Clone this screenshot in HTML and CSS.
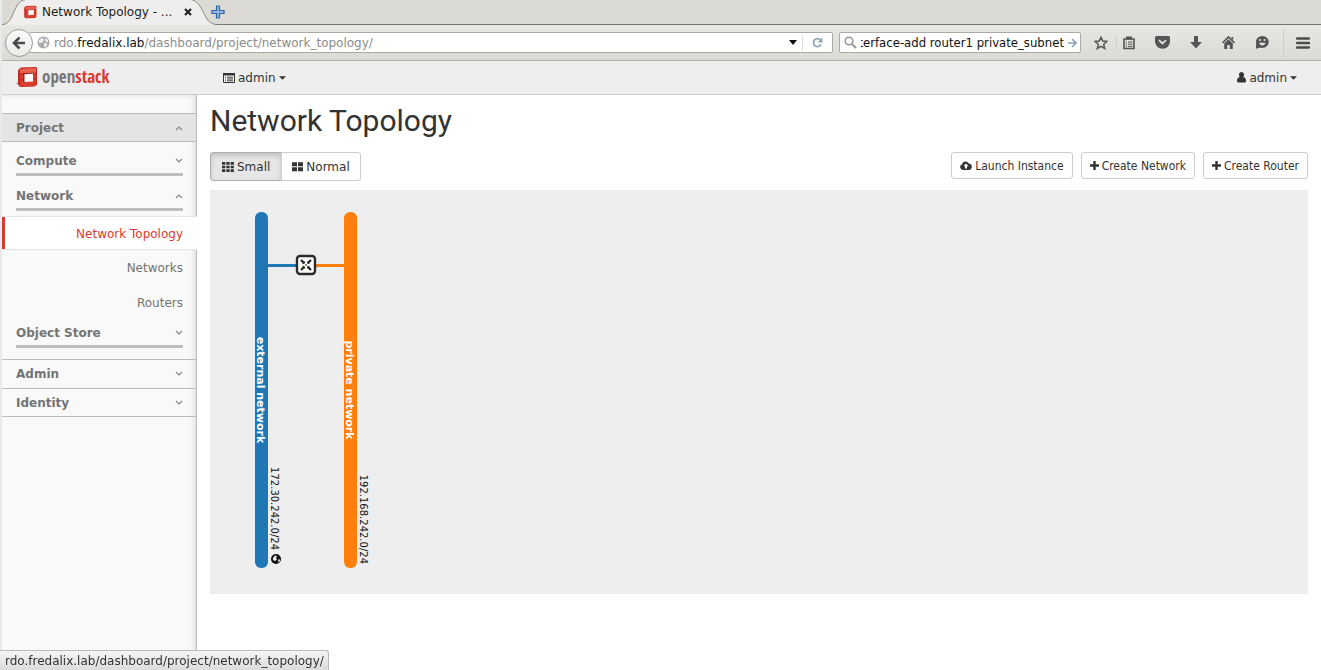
FILE: index.html
```
<!DOCTYPE html>
<html lang="en">
<head>
<meta charset="utf-8">
<title>Network Topology - OpenStack Dashboard</title>
<link rel="stylesheet" href="styles.css">
</head>
<body>
<svg class="defs" width="0" height="0" aria-hidden="true">
  <symbol id="cube" viewBox="0 0 22 22">
    <path d="M0 17l3-1v4z" fill="#a9a9a9"/>
    <path d="M2 4L5 1.500 20 1l1 1v17l-3 1.500L4 21l-2-3z" fill="#c5281c"/>
    <path d="M4 3L20 2v17.500L4 20.500z" fill="#dd3d2d"/>
    <path d="M4 3l16-1v4L4 7z" fill="#e8604f"/>
    <path d="M3 14h4M17 13h4M2 8h5M17 8h4" stroke="#b52a1e" stroke-width="1"/>
    <path d="M7 7l10-.5v9L7 16z" fill="#fff"/>
    <path d="M7 7l10-.5v1.200L8.500 8.200v7.700L7 16z" fill="#a3261b"/>
  </symbol>
  <symbol id="up" viewBox="0 0 8 6"><path d="M1 5l3-3 3 3" fill="none" stroke="#858585" stroke-width="1.200"/></symbol>
  <symbol id="down" viewBox="0 0 8 6"><path d="M1 1l3 3 3-3" fill="none" stroke="#858585" stroke-width="1.200"/></symbol>
  <symbol id="caret" viewBox="0 0 8 4"><path d="M0 0h8L4 4z" fill="#333"/></symbol>
  <symbol id="plus" viewBox="0 0 9 9"><path d="M3.300 0h2.400v3.300H9v2.400H5.700V9H3.300V5.700H0V3.300h3.300z" fill="#333"/></symbol>
</svg>

<div class="tabs">
  <svg class="tab-shape" viewBox="0 0 216 25" width="216" height="25" aria-hidden="true">
    <path d="M0 24.500C13 24.500 10 1 24 -0.500H188C203 1 200 24.500 215 24.500V26H0z" fill="#efeeec" stroke="#8a8983"/>
  </svg>
  <div class="tab">
    <svg width="14" height="14"><use href="#cube"/></svg>
    <span class="tab-title">Network Topology - ...</span>
    <button class="bare" aria-label="Close tab"><svg width="8" height="8" viewBox="0 0 8 8"><path d="M1 1l6 6M7 1L1 7" stroke="#222" stroke-width="2.200"/></svg></button>
  </div>
  <button class="bare new-tab" aria-label="New tab"><svg width="14" height="14" viewBox="0 0 14 14"><path d="M5.500 1h3v4.500H13v3H8.500V13h-3V8.500H1v-3h4.500z" fill="#8fb8e4" stroke="#3465a4" stroke-width="1.200"/></svg></button>
</div>

<div class="toolbar">
  <button class="back" aria-label="Back"><svg width="14" height="14" viewBox="0 0 14 14"><path d="M7.500 1.500L2 7l5.500 5.500M2.500 7H13" fill="none" stroke="#4c4c4c" stroke-width="2.600"/></svg></button>
  <div class="urlbar">
    <svg width="13" height="13" viewBox="0 0 13 13"><circle cx="6.500" cy="6.500" r="6" fill="#aaa"/><path d="M2 4l3-2 2 1-1 3-2 1-2 0zM8 2l3 2v2l-2 0-1-2zM7 7l3 0 0 2-2 3-1-2z" fill="#eee"/></svg>
    <label class="host" for="url">rdo.<b>fredalix.lab</b></label>
    <input id="url" type="text" value="/dashboard/project/network_topology/">
    <button class="bare" aria-label="History"><svg width="8" height="5" viewBox="0 0 8 5"><path d="M0 0h8L4 5z" fill="#111"/></svg></button>
    <button class="bare reload" aria-label="Reload"><svg width="11" height="11" viewBox="0 0 11 11"><path d="M9 7.500A4 4 0 1 1 8.500 3" fill="none" stroke="#8fa3b5" stroke-width="1.700"/><path d="M10.500 0.500v5H5.500z" fill="#8fa3b5"/></svg></button>
  </div>
  <div class="search">
    <svg width="13" height="13" viewBox="0 0 13 13"><circle cx="5" cy="5" r="3.800" fill="none" stroke="#999" stroke-width="1.600"/><path d="M8 8l4 4" stroke="#999" stroke-width="2"/></svg>
    <input type="text" dir="rtl" aria-label="Search" value="neutron router-interface-add router1 private_subnet">
    <button class="bare" aria-label="Go"><svg width="9" height="10" viewBox="0 0 9 10"><path d="M0 5h8M4 1l4 4-4 4" fill="none" stroke="#8fa3b5" stroke-width="1.600"/></svg></button>
  </div>
  <div class="tools">
    <button class="bare" aria-label="Bookmark"><svg width="14" height="14" viewBox="0 0 14 14"><path d="M7 1.200l1.700 3.900 4.200.4-3.200 2.800 1 4.200L7 10.300l-3.700 2.200 1-4.200L1.100 5.500l4.200-.4z" fill="none" stroke="#555" stroke-width="1.500"/></svg></button>
    <button class="bare list" aria-label="Bookmarks list"><svg width="12" height="14" viewBox="0 0 12 14"><path d="M1 3h10v9.500H1z" fill="none" stroke="#555" stroke-width="1.600"/><path d="M3 0.500h6V3.500H3z" fill="#555"/><path d="M2.700 6H4M5 6h4.500M2.700 8.200H4M5 8.200h4.500M2.700 10.400H4M5 10.400h4.500" stroke="#555"/></svg></button>
    <button class="bare" aria-label="Pocket"><svg width="15" height="13" viewBox="0 0 15 13"><path d="M1.500 0h12Q15 0 15 1.500V5.500a7.500 7.300 0 0 1-15 0V1.500Q0 0 1.500 0z" fill="#555"/><path d="M4 4.200l3.500 3.300L11 4.200" fill="none" stroke="#e4e3df" stroke-width="1.800"/></svg></button>
    <button class="bare" aria-label="Downloads"><svg width="12" height="13" viewBox="0 0 12 13"><path d="M4 0h4v6h4l-6 6.500L0 6h4z" fill="#555"/></svg></button>
    <button class="bare" aria-label="Home"><svg width="13" height="13" viewBox="0 0 13 13"><path d="M.5 7l6-6 6 6" fill="none" stroke="#555" stroke-width="1.700"/><path d="M2.200 7.500l4.300-4.200 4.300 4.200V13H7.800V9H5.200v4h-3zM9.500 1h1.700v3.200L9.500 2.700z" fill="#555"/></svg></button>
    <button class="bare" aria-label="Chat"><svg width="14" height="13" viewBox="0 0 14 13"><ellipse cx="7.300" cy="6" rx="6.500" ry="6" fill="#555"/><path d="M1 8v4.800l5-1.500z" fill="#555"/><path d="M4 6.800h6.600Q9.500 9.500 7.300 9.500T4 6.800z" fill="#e4e3df"/><circle cx="5" cy="4" r="1" fill="#e4e3df"/><circle cx="9.500" cy="4" r="1" fill="#e4e3df"/></svg></button>
    <button class="bare menu" aria-label="Menu"><svg width="14" height="12" viewBox="0 0 14 12"><path d="M1 1.500h12M1 6h12M1 10.500h12" stroke="#4c4c4c" stroke-width="2.400" stroke-linecap="round"/></svg></button>
  </div>
</div>

<header class="topbar">
  <a class="brand" href="#"><svg width="22" height="22"><use href="#cube"/></svg><span>open<em>stack</em></span></a>
  <button class="bare project"><svg width="12" height="10" viewBox="0 0 12 10"><path d="M.5.5h11v9H.5z" fill="#fff" stroke="#333"/><path d="M0 0h12v2.500H0z" fill="#333"/><path d="M2 4.200h1M4 4.200h6M2 6h1M4 6h6M2 7.800h1M4 7.800h6" stroke="#333"/></svg>admin<svg width="7" height="4"><use href="#caret"/></svg></button>
  <button class="bare user"><svg width="9" height="11" viewBox="0 0 9 11"><path d="M4.500 0a2.600 2.800 0 0 1 1.700 4.900Q9 5.500 9 9q0 1.500-1.500 1.500h-6Q0 10.500 0 9 0 5.500 2.800 4.900A2.600 2.800 0 0 1 4.500 0z" fill="#333"/></svg>admin<svg width="7" height="4"><use href="#caret"/></svg></button>
</header>

<div class="body">
  <nav class="sidebar">
    <button class="panel open">Project<svg width="8" height="6"><use href="#up"/></svg></button>
    <div class="groups">
      <button class="group">Compute<svg width="8" height="6"><use href="#down"/></svg></button>
      <button class="group">Network<svg width="8" height="6"><use href="#up"/></svg></button>
      <div class="links">
        <a class="active" href="#">Network Topology</a>
        <a href="#">Networks</a>
        <a href="#">Routers</a>
      </div>
      <button class="group">Object Store<svg width="8" height="6"><use href="#down"/></svg></button>
    </div>
    <button class="panel">Admin<svg width="8" height="6"><use href="#down"/></svg></button>
    <button class="panel">Identity<svg width="8" height="6"><use href="#down"/></svg></button>
  </nav>

  <main class="content">
    <h1>Network Topology</h1>
    <div class="actions">
      <div class="toggle">
        <button class="pressed"><svg width="12" height="10" viewBox="0 0 12 10"><path d="M0 1.400h12M0 5h12M0 8.600h12" stroke="#333" stroke-width="2.600" stroke-dasharray="3.300 1"/></svg>Small</button>
        <button><svg width="11" height="10" viewBox="0 0 11 10"><path d="M0 2.200h11M0 7.200h11" stroke="#333" stroke-width="4" stroke-dasharray="5 1"/></svg>Normal</button>
      </div>
      <div class="create">
        <button><svg width="12" height="9" viewBox="0 0 12 9"><path d="M3 9a3 3 0 0 1-.9-5.800A3.500 3.500 0 0 1 8.700 2.500 3.300 3.300 0 0 1 9.300 9z" fill="#333"/><path d="M6 2.500l2.600 2.800H7v2.200H5V5.300H3.400z" fill="#fff"/></svg>Launch Instance</button>
        <button><svg width="9" height="9"><use href="#plus"/></svg>Create Network</button>
        <button><svg width="9" height="9"><use href="#plus"/></svg>Create Router</button>
      </div>
    </div>
    <div class="canvas">
      <svg class="topology" width="200" height="404" viewBox="0 0 200 404">
        <path d="M57 75.500h30" stroke="#1f77b4" stroke-width="3"/>
        <path d="M104 75.500h31" stroke="#ff7f0e" stroke-width="3"/>
        <rect x="45" y="22" width="13" height="356" rx="6" fill="#1f77b4"/>
        <rect x="134" y="22" width="13" height="356" rx="6" fill="#ff7f0e"/>
        <rect x="87" y="66" width="18" height="18" rx="3" fill="#fff" stroke="#2b2b2b" stroke-width="2.400"/>
        <path d="M91 70l3.500 3.500M101 70l-3.500 3.500M91 80l3.500-3.500M101 80l-3.500-3.500" stroke="#222" stroke-width="2.200"/>
        <path d="M95 71v3h-3zM97 71v3h3zM95 79v-3h-3zM97 79v-3h3z" fill="#333"/>
        <path d="M94 73l4 4M98 73l-4 4" stroke="#888"/>
        <text class="net" transform="translate(47 200) rotate(90)">external network</text>
        <text class="net" transform="translate(136 200) rotate(90)">private network</text>
        <text class="cidr" transform="translate(61 360) rotate(90)">172.30.242.0/24</text>
        <text class="cidr" transform="translate(150 374) rotate(90)">192.168.242.0/24</text>
        <circle cx="66" cy="369" r="5" fill="#111"/>
        <path d="M63 368l2-2.500 2 .5-1 2 1 1.500-2 1.500-2-1zM68 370l1.500-1 .5 2-1.500 1.500z" fill="#eee"/>
      </svg>
    </div>
  </main>
</div>
<div class="status">rdo.fredalix.lab/dashboard/project/network_topology/</div>
</body>
</html>
```
FILE: styles.css
```
* { box-sizing: border-box; }
body {
  margin: 0;
  min-height: 100vh;
  display: flex;
  flex-direction: column;
  border-left: 2px solid #e9e9e9;
  background: #fff;
  color: #333;
  font: 12px/18px "DejaVu Sans", sans-serif;
}
svg { display: block; flex: none; }
.defs { position: absolute; }
button { font: inherit; color: inherit; cursor: pointer; }
.bare { display: flex; align-items: center; padding: 0; border: 0; background: none; }

.tabs {
  position: relative;
  display: flex;
  align-items: center;
  height: 25px;
  background: #dbdad5;
  border-bottom: 1px solid #76756e;
}
.tab-shape { position: absolute; left: 0; top: 0; }
.tab {
  position: relative;
  display: flex;
  align-items: center;
  gap: 5px;
  width: 190px;
  padding-left: 21px;
  color: #1c1c1c;
}
.tab-title { flex: 1; white-space: nowrap; }
.new-tab { position: relative; margin-left: 19px; }

.toolbar {
  display: flex;
  align-items: center;
  height: 36px;
  padding: 0 11px 0 3px;
  background: linear-gradient(#e8e7e4, #dbdad5);
  border-bottom: 1px solid #b3b2ab;
}
.toolbar input {
  min-width: 0;
  flex: 1;
  padding: 0;
  border: 0;
  outline: 0;
  background: none;
  font: inherit;
}
.back {
  position: relative;
  z-index: 1;
  display: grid;
  place-items: center;
  width: 28px;
  height: 28px;
  padding: 0;
  border: 1px solid #9c9b95;
  border-radius: 50%;
  background: linear-gradient(#fbfbfa, #ecebe9);
}
.urlbar, .search {
  display: flex;
  align-items: center;
  height: 21px;
  background: #fff;
  border: 1px solid #aaa9a2;
  border-radius: 2px;
}
.urlbar { flex: 1; margin-left: -4px; padding-left: 8px; border-left: 0; }
.host { margin-left: 4px; color: #8c8c8c; }
.host b { font-weight: normal; color: #111; }
.urlbar input { color: #8c8c8c; }
.reload { margin-left: 5px; width: 30px; height: 15px; justify-content: center; border-left: 1px solid #ddd; }
.search {
  width: 242px;
  margin-left: 6px;
  padding: 0 3px 0 4px;
  gap: 4px;
  font: 13px/18px "DejaVu Sans Condensed", "DejaVu Sans", sans-serif;
}
.search input { color: #111; }
.tools { display: flex; align-items: center; gap: 20px; margin-left: 13px; }
.list { margin-left: -12px; padding-left: 6px; border-left: 1px solid #ccc; }
.menu { height: 28px; margin-left: -6px; padding-left: 12px; border-left: 1px solid #ccc; }

.topbar {
  display: flex;
  align-items: center;
  height: 34px;
  padding: 0 24px 0 14px;
  background: #eee;
  border-bottom: 1px solid #ccc;
}
.brand {
  display: flex;
  align-items: center;
  gap: 4px;
  width: 207px;
  padding-bottom: 2px;
  color: #777;
  font: 17px/22px "Open Sans Condensed", "Liberation Sans Narrow", sans-serif;
  text-decoration: none;
}
.brand em { font-style: normal; color: #dc3a2e; }
.project, .user { gap: 3px; }
.user { margin-left: auto; }

.body { flex: 1; display: flex; }
.sidebar {
  flex: none;
  width: 195px;
  padding-top: 18px;
  background: #f9f9f9;
  border-right: 1px solid #bbb;
  box-shadow: inset -4px 2px 5px -2px #ddd;
  font-weight: bold;
  color: #747474;
}
.panel, .group {
  display: flex;
  align-items: center;
  justify-content: space-between;
  border: 0 solid #bbb;
  background: none;
  text-align: left;
}
.panel {
  width: 100%;
  height: 29px;
  padding: 0 13px 0 14px;
  border-width: 1px 0 0;
}
.panel:last-child { border-bottom-width: 1px; }
.panel.open { background: #e3e4e6; border-bottom-width: 1px; }
.groups { display: flex; flex-direction: column; padding: 6px 0 11px; }
.group {
  height: 28px;
  margin: 0 13px 7px 14px;
  padding: 0;
  border-bottom: 3px solid #bfbfbf;
}
.group:last-child { margin-bottom: 0; }
.links { display: flex; flex-direction: column; margin-top: -2px; gap: 1px; }
.links a {
  height: 34px;
  padding: 0 13px;
  color: #747474;
  font-weight: normal;
  line-height: 34px;
  text-align: right;
  text-decoration: none;
}
.links .active {
  margin-right: -1px;
  padding-right: 14px;
  background: #fff;
  border: solid #e3e3e3;
  border-width: 1px 0;
  box-shadow: inset 3px 0 #dc3a2e;
  color: #dc3a2e;
}

.content { flex: 1; min-width: 0; padding: 6px 13px 20px; }
h1 { margin: 0; font: 30px/40px Roboto, "Noto Sans", sans-serif; }
.actions { display: flex; justify-content: space-between; margin: 11px 0 9px; }
.toggle, .create { display: flex; }
.create { gap: 8px; font: 12px/18px "DejaVu Sans Condensed", "DejaVu Sans", sans-serif; }
.actions button {
  display: flex;
  align-items: center;
  gap: 3px;
  height: 27px;
  padding: 0 8px;
  background: #fff;
  border: 1px solid #ccc;
  border-radius: 3px;
}
.toggle button { height: 29px; padding: 0 10px; border-radius: 0 3px 3px 0; }
.toggle .pressed {
  margin-right: -1px;
  padding: 0 11px;
  background: #e6e6e6;
  border-color: #adadad;
  border-radius: 3px 0 0 3px;
  box-shadow: inset 0 3px 5px #c4c4c4;
}
.canvas { background: #eee; }
.net { fill: #fff; font-size: 11px; font-weight: bold; text-anchor: middle; }
.cidr { fill: #111; font-size: 10px; text-anchor: end; }

.status {
  position: fixed;
  left: 0;
  bottom: 0;
  padding: 1px 4px 0 5px;
  background: linear-gradient(#f5f5f5, #dcdcdc);
  border: 1px solid #bbb;
  border-width: 1px 1px 0 0;
  border-radius: 0 3px 0 0;
}
```
